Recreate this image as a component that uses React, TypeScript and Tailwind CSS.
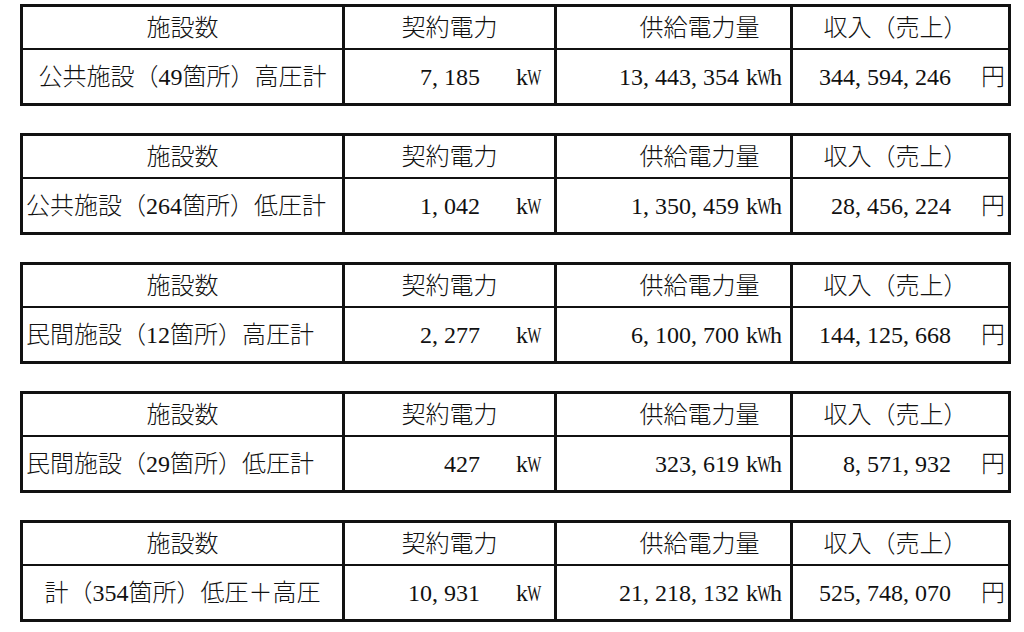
type Row = {
  name: string;
  center: boolean;
  kw: string;
  kwh: string;
  yen: string;
};

const rows: Row[] = [
  { name: "公共施設（49箇所）高圧計", center: true, kw: "7,185", kwh: "13,443,354", yen: "344,594,246" },
  { name: "公共施設（264箇所）低圧計", center: false, kw: "1,042", kwh: "1,350,459", yen: "28,456,224" },
  { name: "民間施設（12箇所）高圧計", center: false, kw: "2,277", kwh: "6,100,700", yen: "144,125,668" },
  { name: "民間施設（29箇所）低圧計", center: false, kw: "427", kwh: "323,619", yen: "8,571,932" },
  { name: "計（354箇所）低圧＋高圧", center: true, kw: "10,931", kwh: "21,218,132", yen: "525,748,070" },
];

// half-width cells like the Mincho original: every char gets a 0.5em box
function Mono({ v }: { v: string }) {
  return (
    <span className="inline-flex items-baseline">
      {v.split("").map((c, i) =>
        c === "," ? (
          <span key={i} className="inline-block w-[0.5em] text-left">
            {c}
          </span>
        ) : c === "W" ? (
          <span key={i} className="inline-flex w-[0.5em] justify-center">
            <span className="inline-block scale-x-[0.62]">{c}</span>
          </span>
        ) : (
          <span key={i} className="inline-flex w-[0.5em] justify-center">
            {c}
          </span>
        )
      )}
    </span>
  );
}

function Block({ row }: { row: Row }) {
  return (
    <div className="w-[991px] border-[3px] border-[#111] grid grid-cols-[322px_212px_236px_215px]">
      {/* header */}
      <div className="h-[43px] border-r-[3px] border-b-[2px] border-[#111] flex items-center justify-center">施設数</div>
      <div className="h-[43px] border-r-[3px] border-b-[2px] border-[#111] flex items-center justify-center">契約電力</div>
      <div className="h-[43px] border-r-[3px] border-b-[2px] border-[#111] flex items-center justify-center pl-[52px]">供給電力量</div>
      <div className="h-[43px] border-b-[2px] border-[#111] flex items-center justify-center pr-[10px]">収入（売上）</div>
      {/* values */}
      <div
        className={
          row.center
            ? "h-[53px] border-r-[3px] border-[#111] flex items-center justify-center whitespace-nowrap"
            : "h-[53px] border-r-[3px] border-[#111] flex items-center justify-start pl-[3px] whitespace-nowrap"
        }
      >
        {row.name}
      </div>
      <div className="h-[53px] border-r-[3px] border-[#111] flex items-center justify-end pr-[14px]">
        <div className="flex items-baseline gap-[36px]">
          <Mono v={row.kw} />
          <Mono v="kW" />
        </div>
      </div>
      <div className="h-[53px] border-r-[3px] border-[#111] flex items-center justify-end pr-[8px]">
        <div className="flex items-baseline gap-[7px]">
          <Mono v={row.kwh} />
          <Mono v="kWh" />
        </div>
      </div>
      <div className="h-[53px] flex items-center justify-end pr-[3px]">
        <div className="flex items-baseline gap-[30px]">
          <Mono v={row.yen} />
          <span>円</span>
        </div>
      </div>
    </div>
  );
}

export default function App() {
  return (
    <div className="w-[1024px] h-[632px] bg-white text-[#111] text-[24px] leading-none font-light font-['Liberation_Serif','Noto_Sans_CJK_JP',serif] overflow-hidden">
      <div className="flex flex-col gap-[27px] pt-[4px] pl-[20px]">
        {rows.map((r) => (
          <Block key={r.name} row={r} />
        ))}
      </div>
    </div>
  );
}
